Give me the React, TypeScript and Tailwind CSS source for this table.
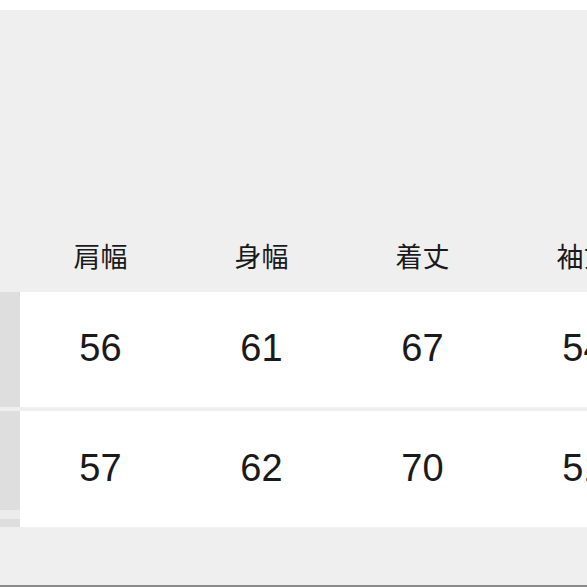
import React from "react";

const headers = ["肩幅", "身幅", "着丈", "袖丈"];
const rows = [
  ["56", "61", "67", "54"],
  ["57", "62", "70", "51"],
];

export default function App() {
  return (
    <div
      className="w-[587px] h-[587px] overflow-hidden bg-[#efefef] flex flex-col text-[#1a1a1a]"
      style={{ fontFamily: '"Liberation Sans", "Noto Sans CJK JP", sans-serif' }}
    >
      <div className="h-[10px] bg-white shrink-0" />
      <div className="h-[282px] shrink-0 flex items-end pb-[18px]">
        <div className="w-[20px] shrink-0" />
        {headers.map((h) => (
          <div
            key={h}
            className="w-[161px] shrink-0 flex justify-center text-[27px] leading-[36px] whitespace-nowrap"
            style={{ fontFamily: '"Noto Sans CJK JP", sans-serif' }}
          >
            {h}
          </div>
        ))}
      </div>
      <div className="flex flex-col gap-[4px] shrink-0">
        <div className="h-[115px] flex">
          <div className="w-[20px] shrink-0 bg-[#dedede]" />
          <div className="flex bg-white flex-1">
            {rows[0].map((v, i) => (
              <div
                key={i}
                className="w-[161px] shrink-0 flex items-center justify-center text-[38px] pb-[2px]"
              >
                {v}
              </div>
            ))}
          </div>
        </div>
        <div className="h-[116px] flex">
          <div className="w-[20px] shrink-0 flex flex-col">
            <div className="h-[99px] bg-[#dedede]" />
            <div className="h-[9px] bg-[#ececec]" />
            <div className="flex-1 bg-[#dedede]" />
          </div>
          <div className="flex bg-white flex-1">
            {rows[1].map((v, i) => (
              <div
                key={i}
                className="w-[161px] shrink-0 flex items-center justify-center text-[38px] pb-[2px]"
              >
                {v}
              </div>
            ))}
          </div>
        </div>
      </div>
      <div className="flex-1" />
      <div className="h-[2px] bg-[#8a8a8a] shrink-0" />
    </div>
  );
}
